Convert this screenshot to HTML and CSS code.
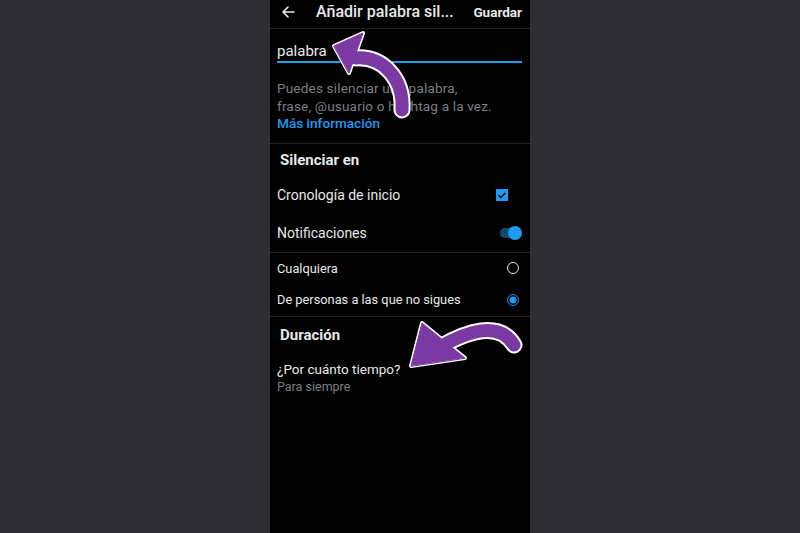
FILE: index.html
```html
<!DOCTYPE html>
<html lang="es">
<head>
<meta charset="utf-8">
<link rel="stylesheet" href="styles.css">
</head>
<body>
<div class="phone">
  <div class="header">
    <span class="back">
      <svg width="14" height="14" viewBox="0 0 14 14"><path d="M13 7H2M7 2L2 7l5 5" fill="none" stroke="#e7e9ea" stroke-width="1.6" stroke-linecap="round" stroke-linejoin="round"/></svg>
    </span>
    <span class="title">Añadir palabra sil...</span>
    <span class="save">Guardar</span>
  </div>
  <div class="input-section">
    <div class="input">palabra</div>
    <p class="help">Puedes silenciar una palabra,<br>frase, @usuario o hashtag a la vez.<br><a class="more">Más información</a></p>
  </div>
  <div class="section">
    <div class="section-title">Silenciar en</div>
    <div class="row tall"><span>Cronología de inicio</span><span class="checkbox"><svg width="12" height="12" viewBox="0 0 12 12"><path d="M2.6 6.2l2.3 2.3 4.5-4.6" fill="none" stroke="#000" stroke-width="1.5"/></svg></span></div>
    <div class="row tall"><span>Notificaciones</span><span class="toggle"><span class="knob"></span></span></div>
  </div>
  <div class="section">
    <div class="row short"><span>Cualquiera</span><span class="radio"></span></div>
    <div class="row short"><span>De personas a las que no sigues</span><span class="radio on"></span></div>
  </div>
  <div class="section last">
    <div class="section-title dur">Duración</div>
    <div class="question">¿Por cuánto tiempo?</div>
    <div class="answer">Para siempre</div>
  </div>
  <svg class="arrows" width="260" height="533" viewBox="0 0 260 533">
    <g fill="none" stroke="#fff" stroke-linecap="round" stroke-linejoin="round">
      <path d="M86 58 C112 56 134 78 132 110" stroke-width="17"/>
      <polygon points="64,46 93,33 79,73" fill="#fff" stroke-width="4"/>
      <path d="M170 347 C196 332 229 320 244 345" stroke-width="17"/>
      <polygon points="141,366 152,323 195,358" fill="#fff" stroke-width="4"/>
    </g>
    <g fill="none" stroke="#7b3aa3" stroke-linecap="round" stroke-linejoin="round">
      <path d="M86 58 C112 56 134 78 132 110" stroke-width="13"/>
      <polygon points="64,46 93,33 79,73" fill="#7b3aa3" stroke-width="1"/>
      <path d="M170 347 C196 332 229 320 244 345" stroke-width="13"/>
      <polygon points="141,366 152,323 195,358" fill="#7b3aa3" stroke-width="1"/>
    </g>
  </svg>
</div>
</body>
</html>
```
FILE: styles.css
```css
html, body {
  margin: 0;
  padding: 0;
  height: 100%;
}
body {
  background: #2b2f33;
  display: flex;
  justify-content: center;
  font-family: Roboto, "Liberation Sans", sans-serif;
  color: #e7e9ea;
}
.phone {
  position: relative;
  width: 260px;
  height: 533px;
  background: #000;
  overflow: hidden;
}
.header {
  height: 29px;
  box-sizing: border-box;
  display: flex;
  align-items: flex-start;
  padding: 2px 8px 0 11px;
  border-bottom: 1px solid #1f2326;
}
.back {
  width: 14px;
  height: 20px;
  display: flex;
  align-items: center;
}
.title {
  margin-left: 21px;
  font-size: 16px;
  line-height: 20px;
  font-weight: 500;
  flex: 1;
  white-space: nowrap;
}
.save {
  font-size: 13.5px;
  line-height: 20px;
  font-weight: 700;
}
.input-section {
  padding: 12px 8px 10px 7px;
  border-bottom: 1px solid #1f2326;
}
.input {
  font-size: 15px;
  line-height: 20px;
  border-bottom: 2px solid #1d9bf0;
}
.help {
  margin: 17px 0 0;
  font-size: 13.6px;
  line-height: 17.5px;
  color: #7a7f84;
  white-space: nowrap;
  letter-spacing: 0.15px;
}
.more {
  color: #1d9bf0;
  font-weight: 500;
  letter-spacing: 0;
}
.section {
  border-bottom: 1px solid #1f2326;
}
.section.last {
  border-bottom: none;
}
.section-title {
  height: 32px;
  line-height: 33px;
  padding-left: 10px;
  font-size: 15px;
  font-weight: 700;
}
.section-title.dur {
  height: 36px;
  line-height: 36px;
}
.row {
  display: flex;
  align-items: center;
  justify-content: space-between;
  padding: 0 10px 0 7px;
}
.row.tall {
  height: 38px;
  font-size: 14px;
}
.row.short {
  height: 31.5px;
  font-size: 12.8px;
}
.checkbox {
  width: 12px;
  height: 12px;
  background: #1d9bf0;
  margin-right: 12px;
  display: flex;
}
.toggle {
  position: relative;
  width: 20px;
  height: 10px;
  border-radius: 5px;
  background: #0d4a72;
}
.knob {
  position: absolute;
  right: -2px;
  top: -2px;
  width: 14px;
  height: 14px;
  border-radius: 50%;
  background: #1d9bf0;
}
.radio {
  width: 10px;
  height: 10px;
  border: 1.6px solid #e7e9ea;
  border-radius: 50%;
  margin-right: 1px;
  box-sizing: content-box;
}
.radio.on {
  border-color: #1d9bf0;
  background: radial-gradient(circle, #1d9bf0 0 3.2px, transparent 3.8px);
}
.question {
  margin-top: 8px;
  padding-left: 7px;
  font-size: 13.5px;
  line-height: 17px;
}
.answer {
  padding-left: 7px;
  font-size: 12.5px;
  line-height: 17px;
  color: #7a7f84;
}
.arrows {
  position: absolute;
  left: 0;
  top: 0;
  pointer-events: none;
}
```
